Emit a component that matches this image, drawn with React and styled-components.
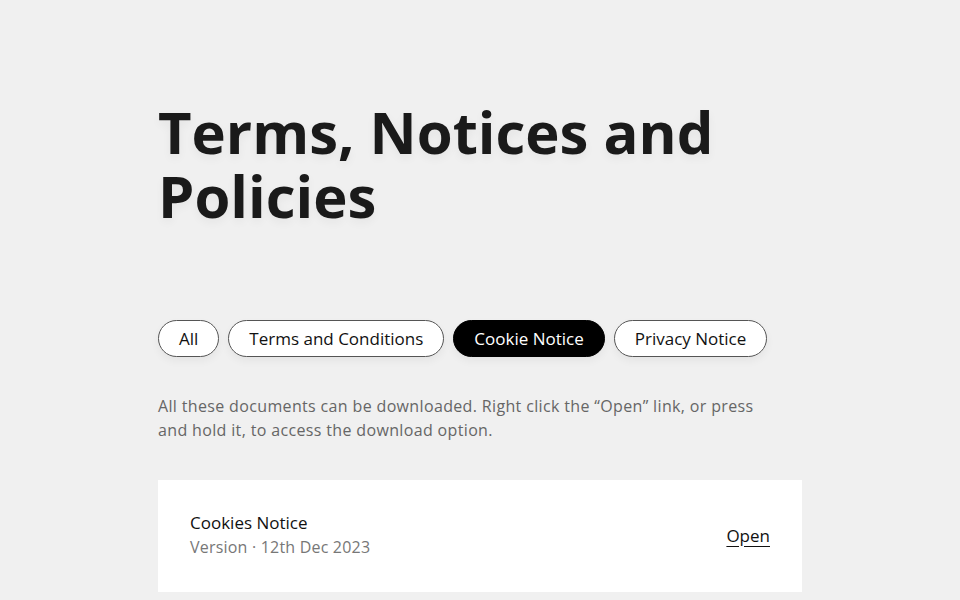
import React, { useState } from "react";
import styled, { createGlobalStyle } from "styled-components";

const GlobalStyle = createGlobalStyle`
  body {
    margin: 0;
    background: #f0f0f0;
    font-family: "Open Sans", "Liberation Sans", sans-serif;
  }
`;

const filters = ["All", "Terms and Conditions", "Cookie Notice", "Privacy Notice"];

const documents = [
  { title: "Cookies Notice", version: "Version · 12th Dec 2023" },
];

function App() {
  const [active, setActive] = useState("Cookie Notice");

  return (
    <Page>
      <GlobalStyle />
      <Content>
        <Title>Terms, Notices and Policies</Title>
        <Filters>
          {filters.map((label) => (
            <Pill
              key={label}
              $active={label === active}
              onClick={() => setActive(label)}
            >
              {label}
            </Pill>
          ))}
        </Filters>
        <Intro>
          All these documents can be downloaded. Right click the “Open” link, or
          press and hold it, to access the download option.
        </Intro>
        {documents.map((doc) => (
          <Card key={doc.title}>
            <CardText>
              <DocTitle>{doc.title}</DocTitle>
              <DocMeta>{doc.version}</DocMeta>
            </CardText>
            <OpenLink href="#">Open</OpenLink>
          </Card>
        ))}
      </Content>
    </Page>
  );
}

const Page = styled.div`
  box-sizing: border-box;
  min-height: 600px;
  padding-top: 100px;
`;

const Content = styled.main`
  width: 644px;
  margin: 0 auto;
  display: flex;
  flex-direction: column;
`;

const Title = styled.h1`
  margin: 0;
  width: 580px;
  font-size: 58px;
  font-weight: 700;
  line-height: 64px;
  color: #1a1a1a;
  text-shadow: 0 4px 10px rgba(0, 0, 0, 0.05);
`;

const Filters = styled.div`
  display: flex;
  gap: 9px;
  margin-top: 92px;
`;

const Pill = styled.button`
  height: 37px;
  padding: 0 20px;
  border-radius: 999px;
  border: 1px solid ${(p) => (p.$active ? "#000" : "#555")};
  background: ${(p) => (p.$active ? "#000" : "#fff")};
  color: ${(p) => (p.$active ? "#fff" : "#111")};
  font-family: inherit;
  font-size: 17px;
  box-shadow: 0 4px 8px rgba(0, 0, 0, 0.05);
  cursor: pointer;
`;

const Intro = styled.p`
  margin: 37px 0 0;
  max-width: 614px;
  font-size: 16px;
  letter-spacing: 0.35px;
  line-height: 24px;
  color: #666;
`;

const Card = styled.div`
  margin-top: 38px;
  background: #fff;
  height: 112px;
  padding: 0 32px;
  display: flex;
  align-items: center;
  justify-content: space-between;
`;

const CardText = styled.div`
  display: flex;
  flex-direction: column;
  margin-top: -2px;
`;

const DocTitle = styled.span`
  font-size: 17px;
  font-weight: 500;
  line-height: 24px;
  color: #111;
`;

const DocMeta = styled.span`
  font-size: 16px;
  letter-spacing: 0.2px;
  line-height: 24px;
  color: #777;
`;

const OpenLink = styled.a`
  margin-top: -2px;
  font-size: 17px;
  color: #111;
  text-decoration: underline;
  text-underline-offset: 4px;
`;

export default App;
